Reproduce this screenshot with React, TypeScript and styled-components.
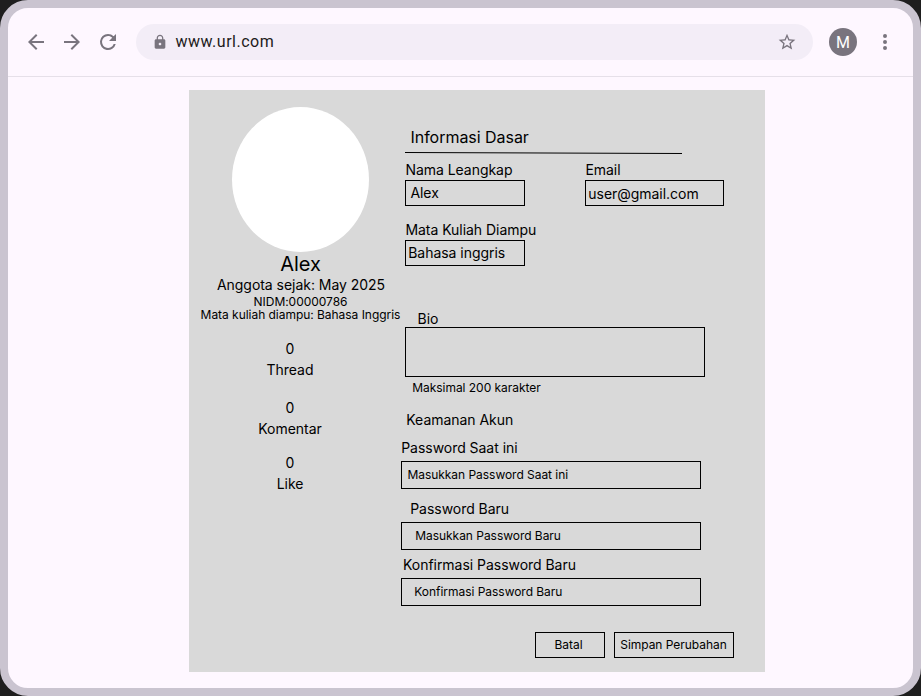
import React from 'react';
import styled, { createGlobalStyle } from 'styled-components';

const GlobalStyle = createGlobalStyle`
  * { box-sizing: border-box; }
  body { margin: 0; background: #1e1e1e; }
`;

const Window = styled.div`
  width: 921px;
  height: 696px;
  border: 8px solid #cac4d0;
  border-radius: 28px;
  background: #fef7ff;
  overflow: hidden;
  display: flex;
  flex-direction: column;
  font-family: Inter, sans-serif;
  letter-spacing: -0.035px;
  color: #000;
`;

const Toolbar = styled.header`
  height: 69px;
  flex: none;
  display: flex;
  align-items: center;
  padding: 0 16px;
  border-bottom: 1px solid #e6e0e9;
`;

const Nav = styled.nav`
  display: flex;
  gap: 12px;
  margin-right: 16px;
`;

const Icon = styled.svg<{ $size?: number }>`
  display: block;
  flex: none;
  width: ${p => p.$size ?? 24}px;
  height: ${p => p.$size ?? 24}px;
  fill: #79747e;
`;

const AddressBar = styled.div`
  width: 677px;
  height: 36px;
  border-radius: 18px;
  background: #f3edf7;
  display: flex;
  align-items: center;
  padding: 0 16px 0 15.5px;
`;

const Url = styled.span`
  flex: 1;
  margin-left: 8px;
  font: 400 16px/24px Roboto, sans-serif;
  letter-spacing: 0.5px;
  color: #1d1b20;
`;

const Avatar = styled.div`
  width: 28px;
  height: 28px;
  margin: 0 16px;
  border-radius: 50%;
  background: #79747e;
  color: #fff;
  font: 400 16px/29px Roboto, sans-serif;
  text-align: center;
`;

const Panel = styled.main`
  width: 576px;
  height: 582px;
  margin: 13px 0 0 181px;
  background: #d9d9d9;
  display: grid;
  grid-template-columns: 212px 1fr;
`;

const Sidebar = styled.aside`
  display: flex;
  flex-direction: column;
  align-items: center;
  padding: 17px 0 0 11px;
`;

const Photo = styled.div`
  width: 137px;
  height: 145px;
  border-radius: 50%;
  background: #fff;
`;

const Text = styled.div<{ $size?: number; $line?: number; $top?: number; $left?: number }>`
  font-size: ${p => p.$size ?? 14}px;
  line-height: ${p => p.$line ?? 17}px;
  margin-top: ${p => p.$top ?? 0}px;
  margin-left: ${p => p.$left ?? 0}px;
  white-space: nowrap;
`;

const Stat = styled.div<{ $top: number }>`
  display: flex;
  flex-direction: column;
  align-items: center;
  gap: 4px;
  margin: ${p => p.$top}px 21px 0 0;
`;

const Form = styled.section`
  display: flex;
  flex-direction: column;
  align-items: flex-start;
  padding-top: 38px;
`;

const Rule = styled.svg`
  display: block;
  width: 277px;
  height: 2px;
  margin: 5px 0 0 4px;
`;

const FieldRow = styled.div<{ $top: number }>`
  display: flex;
  gap: 60px;
  margin: ${p => p.$top}px 0 0 4px;
`;

const Field = styled.div<{ $width?: number }>`
  width: ${p => p.$width ?? 120}px;
`;

const Box = styled.div<{ $height: number; $width?: number; $top?: number; $left?: number; $pad?: number; $size?: number; $line?: number }>`
  width: ${p => (p.$width ? `${p.$width}px` : '100%')};
  height: ${p => p.$height}px;
  margin-top: ${p => p.$top ?? 0}px;
  margin-left: ${p => p.$left ?? 0}px;
  padding-left: ${p => p.$pad ?? 0}px;
  border: 1px solid #000;
  font-size: ${p => p.$size ?? 14}px;
  line-height: ${p => p.$line ?? 24}px;
  white-space: nowrap;
`;

const Actions = styled.div`
  display: flex;
  gap: 9px;
  margin: 26px 0 0 134px;
`;

const Button = styled.button<{ $width: number; $shift?: number }>`
  width: ${p => p.$width}px;
  height: 26px;
  padding: 0 ${p => p.$shift ?? 0}px 0 0;
  border: 1px solid #000;
  background: none;
  color: #000;
  font: 400 12px/24px Inter, sans-serif;
  letter-spacing: inherit;
  white-space: nowrap;
`;

const stats = [
  { label: 'Thread', top: 19 },
  { label: 'Komentar', top: 21 },
  { label: 'Like', top: 17 },
];

export default function App() {
  return (
    <>
      <GlobalStyle />
      <Window>
        <Toolbar>
          <Nav>
            <Icon viewBox="0 0 24 24"><path d="M20 11H7.83l5.59-5.59L12 4l-8 8 8 8 1.41-1.41L7.83 13H20v-2z" /></Icon>
            <Icon viewBox="0 0 24 24"><path d="M12 4l-1.41 1.41L16.17 11H4v2h12.17l-5.58 5.59L12 20l8-8z" /></Icon>
            <Icon viewBox="0 0 24 24"><path d="M17.65 6.35A7.96 7.96 0 0 0 12 4a8 8 0 1 0 7.73 10h-2.08A6 6 0 1 1 12 6c1.66 0 3.14.69 4.22 1.78L13 11h7V4l-2.35 2.35z" /></Icon>
          </Nav>
          <AddressBar>
            <Icon $size={16} viewBox="0 0 24 24"><path d="M18 8h-1V6c0-2.76-2.24-5-5-5S7 3.24 7 6v2H6c-1.1 0-2 .9-2 2v10c0 1.1.9 2 2 2h12c1.1 0 2-.9 2-2V10c0-1.1-.9-2-2-2zm-6 9c-1.1 0-2-.9-2-2s.9-2 2-2 2 .9 2 2-.9 2-2 2zm3.1-9H8.9V6c0-1.71 1.39-3.1 3.1-3.1s3.1 1.39 3.1 3.1v2z" /></Icon>
            <Url>www.url.com</Url>
            <Icon $size={20} viewBox="0 0 24 24"><path d="M22 9.24l-7.19-.62L12 2 9.19 8.63 2 9.24l5.46 4.73L5.82 21 12 17.27 18.18 21l-1.63-7.03L22 9.24zM12 15.4l-3.76 2.27 1-4.28-3.32-2.88 4.38-.38L12 6.1l1.71 4.04 4.38.38-3.32 2.88 1 4.28L12 15.4z" /></Icon>
          </AddressBar>
          <Avatar>M</Avatar>
          <Icon viewBox="0 0 24 24"><path d="M12 8a2 2 0 1 0 0-4 2 2 0 0 0 0 4zm0 2a2 2 0 1 0 0 4 2 2 0 0 0 0-4zm0 6a2 2 0 1 0 0 4 2 2 0 0 0 0-4z" /></Icon>
        </Toolbar>
        <Panel>
          <Sidebar>
            <Photo />
            <Text $size={20} $line={24}>Alex</Text>
            <Text $left={1}>Anggota sejak: May 2025</Text>
            <Text $size={12} $line={13} $top={2}>NIDM:00000786</Text>
            <Text $size={12} $line={13}>Mata kuliah diampu: Bahasa Inggris</Text>
            {stats.map(s => (
              <Stat key={s.label} $top={s.top}>
                <Text>0</Text>
                <Text>{s.label}</Text>
              </Stat>
            ))}
          </Sidebar>
          <Form>
            <Text $size={16} $line={19} $left={9.5}>Informasi Dasar</Text>
            <Rule viewBox="0 0 277 2"><path d="M0 0.5L277 1.5" stroke="#000" /></Rule>
            <FieldRow $top={7}>
              <Field>
                <Text $left={0.4}>Nama Leangkap</Text>
                <Box $height={26} $top={2} $pad={4.4} $line={23}>Alex</Box>
              </Field>
              <Field $width={139}>
                <Text $left={0.4}>Email</Text>
                <Box $height={26} $top={2} $pad={2.3} $line={25}>user@gmail.com</Box>
              </Field>
            </FieldRow>
            <FieldRow $top={15}>
              <Field>
                <Text $left={0.4}>Mata Kuliah Diampu</Text>
                <Box $height={26} $top={2} $pad={2.2} $line={23}>Bahasa inggris</Box>
              </Field>
            </FieldRow>
            <Text $top={44} $left={16.6}>Bio</Text>
            <Box $height={50} $width={300} $left={4} />
            <Text $size={12} $line={15} $top={3} $left={11.2}>Maksimal 200 karakter</Text>
            <Text $top={16} $left={5.3}>Keamanan Akun</Text>
            <Text $top={11} $left={0.2}>Password Saat ini</Text>
            <Box $height={28} $width={300} $top={5} $pad={5.4} $size={12} $line={26}>Masukkan Password Saat ini</Box>
            <Text $top={11} $left={9.2}>Password Baru</Text>
            <Box $height={28} $width={300} $top={5} $pad={13.2} $size={12} $line={26}>Masukkan Password Baru</Box>
            <Text $top={6} $left={2}>Konfirmasi Password Baru</Text>
            <Box $height={28} $width={300} $top={5} $pad={12.3} $size={12} $line={26}>Konfirmasi Password Baru</Box>
            <Actions>
              <Button $width={70} $shift={3}>Batal</Button>
              <Button $width={120} $shift={1}>Simpan Perubahan</Button>
            </Actions>
          </Form>
        </Panel>
      </Window>
    </>
  );
}
